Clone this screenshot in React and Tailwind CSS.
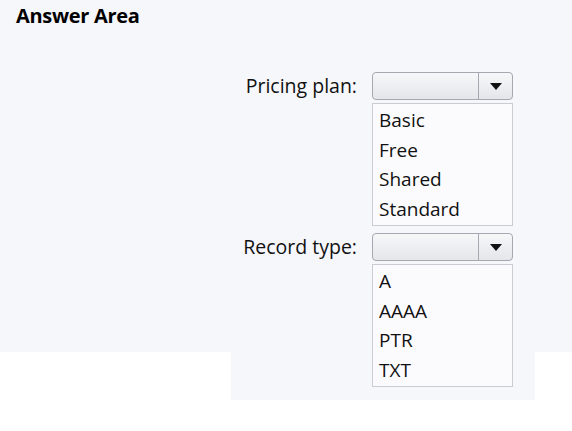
// Answer Area - two labelled drop-downs with their option lists shown open

const font = "font-['Open_Sans','Noto_Sans',sans-serif]";

function Dropdown() {
  return (
    <div className="flex h-[28px] w-[141px] rounded-[4px] border border-[#a4a8b0] bg-gradient-to-b from-[#f6f7f9] to-[#e4e6ea]">
      <div className="flex-1" />
      <div className="flex w-[34px] items-center justify-center border-l border-[#a4a8b0]">
        <svg width="12" height="7" viewBox="0 0 12 7">
          <path d="M0 0h12L6 7z" fill="#111" />
        </svg>
      </div>
    </div>
  );
}

function OptionList({ options }) {
  return (
    <div className="mt-[3px] flex w-[141px] flex-col border border-[#c9ccd3] bg-[#fbfbfd] pb-[1px] pt-[2px]">
      {options.map((o) => (
        <div key={o} className="h-[29.5px] pl-[6px] text-[19px] leading-[29.5px] text-[#111]">
          {o}
        </div>
      ))}
    </div>
  );
}

function Field({ label, options }) {
  return (
    <div className="flex gap-[15px]">
      <div className="flex h-[28px] w-[150px] items-center justify-end text-[19.5px] text-[#111]">
        {label}
      </div>
      <div className="flex flex-col">
        <Dropdown />
        <OptionList options={options} />
      </div>
    </div>
  );
}

export default function App() {
  return (
    <div className={`flex h-[431px] w-[572px] flex-col overflow-hidden bg-white ${font}`}>
      <div className="h-[352px] shrink-0 bg-[#f6f7fb] pl-4 pt-1.5">
        <h1 className="text-[20px] font-bold leading-none tracking-[-0.3px] text-black">Answer Area</h1>

        <div className="relative z-10 ml-[191px] mt-[46px] flex flex-col gap-[7px]">
          <Field label="Pricing plan:" options={['Basic', 'Free', 'Shared', 'Standard']} />
          <Field label="Record type:" options={['A', 'AAAA', 'PTR', 'TXT']} />
        </div>
      </div>

      {/* lower strip: light band under the second list */}
      <div className="flex">
        <div className="w-[231px]" />
        <div className="h-[48px] w-[304px] bg-[#f6f7fb]" />
      </div>
    </div>
  );
}
